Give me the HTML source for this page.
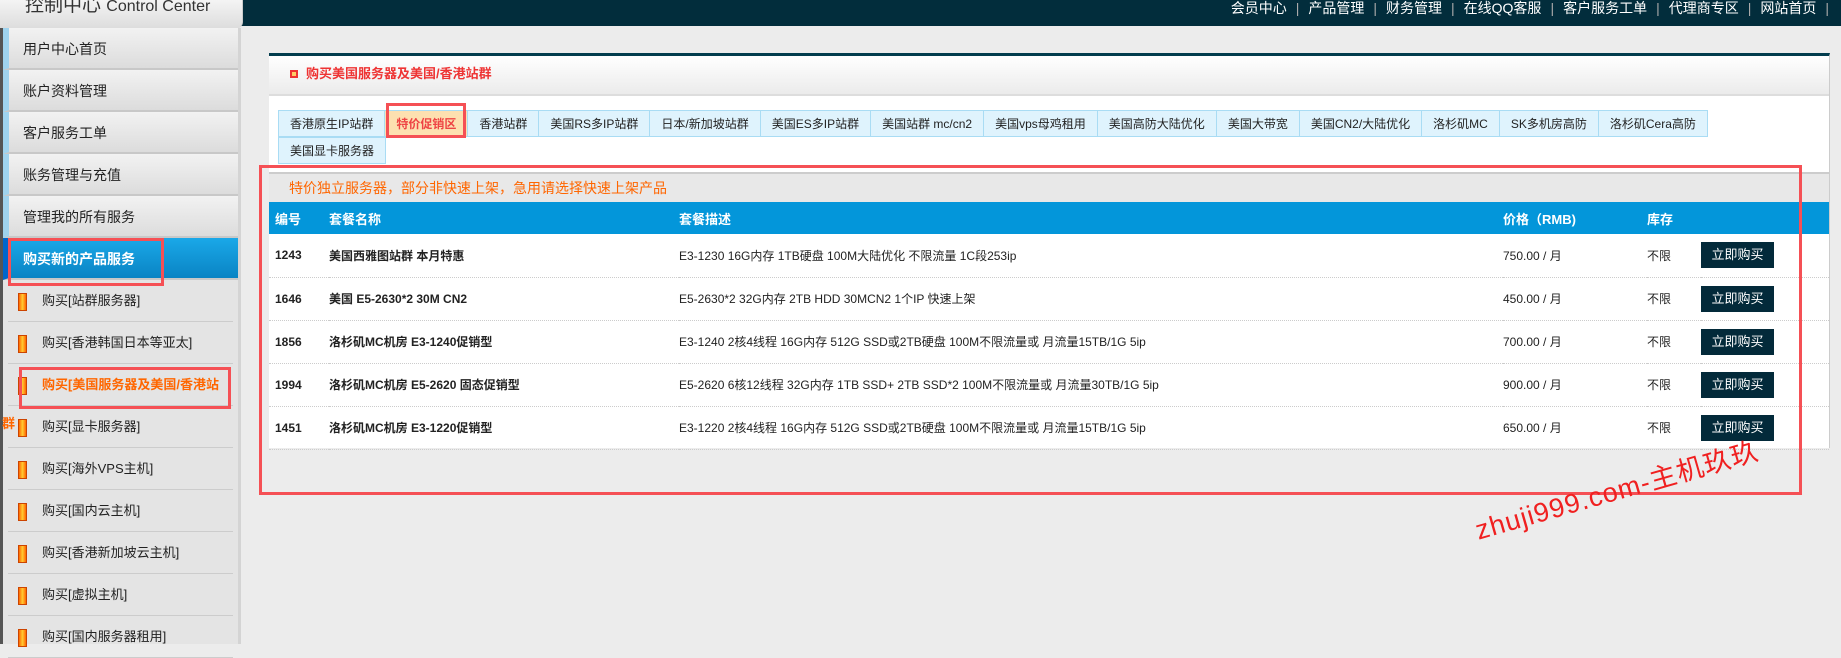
<!DOCTYPE html>
<html><head><meta charset="utf-8"><style>
*{margin:0;padding:0;box-sizing:border-box}
body{width:1841px;height:644px;overflow:hidden;background:#ececec;font-family:"Liberation Sans","Noto Sans CJK SC",sans-serif;position:relative}
.top{position:absolute;left:0;top:0;width:1841px;height:26px;background:#022d3c}
.logo{position:absolute;left:0;top:0;width:243px;height:28px;background:linear-gradient(#f4f4f4,#ddd);border-right:1px solid #ccc;border-bottom-right-radius:6px;font-size:19px;color:#333;padding-left:25px;line-height:12px;overflow:hidden}
.logo span{font-size:16px}
.nav{position:absolute;right:12px;top:0;height:26px;line-height:16px;color:#fff;font-size:14px}
.nav span{margin:0 9px}
.nav i{font-style:normal;color:#aaa}
.side{position:absolute;left:0;top:28px;width:241px;height:616px;background:#e4e4e4;border-right:3px solid #d4d4d4;border-left:3px solid #555}
.m{height:42px;line-height:42px;padding-left:14px;font-size:14px;color:#222;background:linear-gradient(#f2f2f2,#dcdcdc);border-bottom:2px solid #c8c8c8;border-left:6px solid #9fd3ee}
.m.act{background:linear-gradient(#1aa8e8,#0a84c4);color:#fff;font-weight:bold;border-left:6px solid #0066cc}
.s{height:42px;line-height:42px;padding-left:34px;font-size:13px;color:#222;border-bottom:1px solid #ccc;margin:0 0 0 5px;width:225px;position:relative}
.s:before{content:"";position:absolute;left:10px;top:13px;width:7px;height:16px;background:linear-gradient(90deg,#f60,#fc3,#f60);border:1px solid #c40}
.s.o{color:#f60;font-weight:bold}
.panel{position:absolute;left:269px;top:53px;width:1561px;height:395px;background:#fff;border-top:3px solid #033d4e;border-right:1px solid #ccc}
.ph{height:40px;background:linear-gradient(#fff,#ebebeb);border-bottom:2px solid #ddd;font-size:13px;font-weight:bold;color:#e33;line-height:36px;padding-left:21px}
.ph b{display:inline-block;width:8px;height:8px;border:2px solid #e33;background:#fc6;margin-right:8px;vertical-align:0}
.tabs{position:absolute;left:9px;top:54px;width:1500px}
.t{float:left;height:27px;line-height:26px;padding:0 11px;font-size:12px;color:#222;background:#dff3fd;border:1px solid #a9dcf4;border-left:none;white-space:nowrap}
.t:first-child,.t.f{border-left:1px solid #a9dcf4}
.t.a{background:#fde0b0;color:#e44;font-weight:bold}
.bar{position:absolute;left:0;top:116px;width:1560px;height:30px;background:#e8e8e8;border-top:2px solid #ccc;color:#f60;font-size:14px;line-height:28px;padding-left:20px}
table{position:absolute;left:0;top:146px;width:1560px;border-collapse:collapse;font-size:12px;color:#222}
th{background:#0396da;color:#fff;height:32px;text-align:left;font-size:13px}
td{height:43px;border-bottom:1px dotted #ccc}
td.b{font-weight:bold}
.btn{display:inline-block;background:#032a3a;color:#fff;width:73px;height:26px;line-height:26px;text-align:center;font-size:13px}
.rb{position:absolute;border:3px solid #f55055}
.wm{position:absolute;left:1470px;color:#f02020;font-size:27px;transform:rotate(-16deg);transform-origin:left top;white-space:nowrap;letter-spacing:1px}
</style></head><body>
<div class="top"></div>
<div class="logo">控制中心 <span>Control Center</span></div>
<div class="nav"><span>会员中心</span><i>|</i><span>产品管理</span><i>|</i><span>财务管理</span><i>|</i><span>在线QQ客服</span><i>|</i><span>客户服务工单</span><i>|</i><span>代理商专区</span><i>|</i><span>网站首页</span><i>|</i></div>
<div class="side">
<div class="m">用户中心首页</div><div class="m">账户资料管理</div><div class="m">客户服务工单</div><div class="m">账务管理与充值</div><div class="m">管理我的所有服务</div>
<div class="m act">购买新的产品服务</div>
<div class="s">购买[站群服务器]</div><div class="s">购买[香港韩国日本等亚太]</div><div class="s o">购买[美国服务器及美国/香港站</div><div class="s">购买[显卡服务器]</div><div class="s">购买[海外VPS主机]</div><div class="s">购买[国内云主机]</div><div class="s">购买[香港新加坡云主机]</div><div class="s">购买[虚拟主机]</div><div class="s">购买[国内服务器租用]</div>
</div>
<div class="panel">
<div class="ph"><b></b>购买美国服务器及美国/香港站群</div>
<div class="tabs"><div class="t">香港原生IP站群</div><div class="t a">特价促销区</div><div class="t">香港站群</div><div class="t">美国RS多IP站群</div><div class="t">日本/新加坡站群</div><div class="t">美国ES多IP站群</div><div class="t">美国站群 mc/cn2</div><div class="t">美国vps母鸡租用</div><div class="t">美国高防大陆优化</div><div class="t">美国大带宽</div><div class="t">美国CN2/大陆优化</div><div class="t">洛杉矶MC</div><div class="t">SK多机房高防</div><div class="t">洛杉矶Cera高防</div><div class="t f" style="clear:left">美国显卡服务器</div></div>
<div class="bar">特价独立服务器，部分非快速上架，急用请选择快速上架产品</div>
<table>
<tr><th style="width:60px;padding-left:6px">编号</th><th style="width:350px">套餐名称</th><th style="width:824px">套餐描述</th><th style="width:144px">价格（RMB)</th><th style="width:54px">库存</th><th></th></tr>
<tr><td class="b" style="padding-left:6px">1243</td><td class="b">美国西雅图站群 本月特惠</td><td>E3-1230 16G内存 1TB硬盘 100M大陆优化 不限流量 1C段253ip</td><td>750.00 / 月</td><td>不限</td><td><span class="btn">立即购买</span></td></tr>
<tr><td class="b" style="padding-left:6px">1646</td><td class="b">美国 E5-2630*2 30M CN2</td><td>E5-2630*2 32G内存 2TB HDD 30MCN2 1个IP 快速上架</td><td>450.00 / 月</td><td>不限</td><td><span class="btn">立即购买</span></td></tr>
<tr><td class="b" style="padding-left:6px">1856</td><td class="b">洛杉矶MC机房 E3-1240促销型</td><td>E3-1240 2核4线程 16G内存 512G SSD或2TB硬盘 100M不限流量或 月流量15TB/1G 5ip</td><td>700.00 / 月</td><td>不限</td><td><span class="btn">立即购买</span></td></tr>
<tr><td class="b" style="padding-left:6px">1994</td><td class="b">洛杉矶MC机房 E5-2620 固态促销型</td><td>E5-2620 6核12线程 32G内存 1TB SSD+ 2TB SSD*2 100M不限流量或 月流量30TB/1G 5ip</td><td>900.00 / 月</td><td>不限</td><td><span class="btn">立即购买</span></td></tr>
<tr><td class="b" style="padding-left:6px">1451</td><td class="b">洛杉矶MC机房 E3-1220促销型</td><td>E3-1220 2核4线程 16G内存 512G SSD或2TB硬盘 100M不限流量或 月流量15TB/1G 5ip</td><td>650.00 / 月</td><td>不限</td><td><span class="btn">立即购买</span></td></tr>
</table>
</div>
<div class="rb" style="left:259px;top:165px;width:1543px;height:330px"></div>
<div class="rb" style="left:8px;top:238px;width:156px;height:48px"></div>
<div class="rb" style="left:19px;top:367px;width:212px;height:42px"></div>
<div class="rb" style="left:386px;top:103px;width:80px;height:35px"></div>
<div style="position:absolute;left:2px;top:413px;color:#f60;font-size:13px;font-weight:bold">群</div>
<div class="wm" style="top:510px">zhuji999.com-主机玖玖</div>
</body></html>
